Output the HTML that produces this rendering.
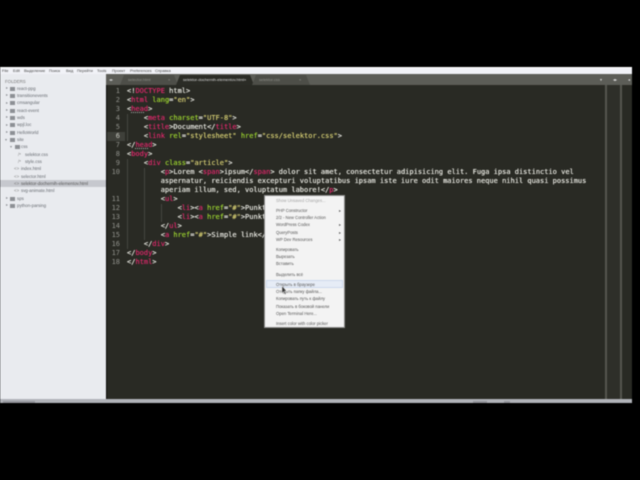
<!DOCTYPE html>
<html><head><meta charset="utf-8"><style>
html,body{margin:0;padding:0;width:640px;height:480px;overflow:hidden;background:#000}
*{box-sizing:border-box}
#f{position:absolute;left:0;top:0;width:640px;height:480px;filter:blur(.45px);overflow:hidden}
#code{position:absolute;left:0;top:1.5px;width:640px;height:320px}
.a{position:absolute;white-space:pre}
.m{font:4px/7px "Liberation Sans","Noto Sans CJK SC",sans-serif;color:#444;top:67px}
.s{font:4.4px/7px "Liberation Sans",sans-serif;color:#666a70}
.c{font:7px/9px "DejaVu Sans Mono",monospace;color:#f5f5ee;left:127px;-webkit-text-stroke:.12px currentColor}
.n{font:7px/9px "DejaVu Sans Mono",monospace;color:#8f908a;left:107px;width:13px;text-align:right}
i{font-style:normal;color:#e8286f}b{font-weight:normal;color:#a2dc30}u{text-decoration:none;color:#e0d878}
.k{font:4.2px/7px "Liberation Sans","Noto Sans CJK SC",sans-serif;color:#555;left:276px}
.ar{font:4px/7px "DejaVu Sans",sans-serif;color:#555;left:339px}
.t{font:4px/11px "Liberation Sans",sans-serif;top:74px;color:#8f908a}
.ico{position:absolute;width:5px;height:4px;background:#8d9095}
.tri{position:absolute;width:0;height:0;border-left:2px solid #8a8d92;border-top:1.5px solid transparent;border-bottom:1.5px solid transparent}
.tro{position:absolute;width:0;height:0;border-top:2px solid #8a8d92;border-left:1.5px solid transparent;border-right:1.5px solid transparent}
.g{position:absolute;width:1px;background:#45463f}
.tab{position:absolute;top:75px;height:10px;clip-path:polygon(0 100%,4px 0,calc(100% - 4px) 0,100% 100%)}
</style></head><body><div id="f">
<div class="a" style="left:0;top:67px;width:632px;height:7px;background:#f1f2f7"></div>
<div class="a" style="left:0;top:67px;width:632px;height:1px;background:#fff"></div>
<div class="a m" style="left:2px">File</div><div class="a m" style="left:13px">Edit</div><div class="a m" style="left:24px">Выделение</div><div class="a m" style="left:49px">Поиск</div><div class="a m" style="left:66px">Вид</div><div class="a m" style="left:77px">Перейти</div><div class="a m" style="left:97px">Tools</div><div class="a m" style="left:112px">Проект</div><div class="a m" style="left:130px">Preferences</div><div class="a m" style="left:155px">Справка</div>

<div class="a" style="left:0;top:74px;width:107px;height:325px;background:#e9ebef"></div>
<div class="a" style="left:5px;top:78px;font:4.4px/7px 'Liberation Sans',sans-serif;color:#777">FOLDERS</div>
<div class="a" style="left:0;top:180px;width:106px;height:7px;background:#c6c8ce"></div>

<div class="tri" style="left:6px;top:87px"></div><div class="ico" style="left:10px;top:87px"></div><div class="a s" style="left:17px;top:85px">react-ppg</div>
<div class="tri" style="left:6px;top:94px"></div><div class="ico" style="left:10px;top:94px"></div><div class="a s" style="left:17px;top:92px">transitionevents</div>
<div class="tri" style="left:6px;top:102px"></div><div class="ico" style="left:10px;top:101px"></div><div class="a s" style="left:17px;top:99px">cmsangular</div>
<div class="tri" style="left:6px;top:109px"></div><div class="ico" style="left:10px;top:109px"></div><div class="a s" style="left:17px;top:107px">react-event</div>
<div class="tri" style="left:6px;top:116px"></div><div class="ico" style="left:10px;top:116px"></div><div class="a s" style="left:17px;top:114px">wds</div>
<div class="tri" style="left:6px;top:124px"></div><div class="ico" style="left:10px;top:123px"></div><div class="a s" style="left:17px;top:121px">wpjl.loc</div>
<div class="tri" style="left:6px;top:131px"></div><div class="ico" style="left:10px;top:131px"></div><div class="a s" style="left:17px;top:129px">HelloWorld</div>
<div class="tro" style="left:5px;top:139px"></div><div class="ico" style="left:10px;top:138px"></div><div class="a s" style="left:17px;top:136px">site</div>
<div class="tro" style="left:10px;top:146px"></div><div class="ico" style="left:15px;top:145px"></div><div class="a s" style="left:21px;top:143px">css</div>
<div class="a s" style="left:18px;top:151px;color:#888">/*</div><div class="a s" style="left:25px;top:151px">selektor.css</div>
<div class="a s" style="left:18px;top:158px;color:#888">/*</div><div class="a s" style="left:25px;top:158px">style.css</div>
<div class="a s" style="left:14px;top:165px;color:#888">&lt;&gt;</div><div class="a s" style="left:21px;top:165px">index.html</div>
<div class="a s" style="left:14px;top:173px;color:#888">&lt;&gt;</div><div class="a s" style="left:21px;top:173px">selector.html</div>
<div class="a s" style="left:14px;top:180px;color:#777">&lt;&gt;</div><div class="a s" style="left:21px;top:180px;color:#555">selektor-dochernih-elementov.html</div>
<div class="a s" style="left:14px;top:187px;color:#888">&lt;&gt;</div><div class="a s" style="left:21px;top:187px">svg-animate.html</div>
<div class="tri" style="left:6px;top:197px"></div><div class="ico" style="left:10px;top:197px"></div><div class="a s" style="left:17px;top:195px">sps</div>
<div class="tri" style="left:6px;top:204px"></div><div class="ico" style="left:10px;top:204px"></div><div class="a s" style="left:17px;top:202px">python-parsing</div>

<div class="a" style="left:106px;top:74px;width:526px;height:11px;background:#5c5d57"></div>
<div class="tab" style="left:120px;width:58px;background:#4d4e48"></div>
<div class="tab" style="left:176px;width:78px;background:#2b2c26"></div>
<div class="tab" style="left:252px;width:58px;background:#4d4e48"></div>
<div class="a t" style="left:128px">selector.html</div><div class="a t" style="left:168px">×</div>
<div class="a t" style="left:183px;color:#ddd">selektor-dochernih-elementov.html</div><div class="a t" style="left:244px;color:#ddd">×</div>
<div class="a t" style="left:259px">selektor.css</div><div class="a t" style="left:299px">×</div>
<div class="a" style="left:109px;top:74px;font:4px/11px 'DejaVu Sans',sans-serif;color:#ccc">◂▸</div>
<div class="a" style="left:600px;top:74px;font:4px/11px 'DejaVu Sans',sans-serif;color:#ddd">▾</div>
<div class="a" style="left:613px;top:74px;font:4px/11px 'DejaVu Sans',sans-serif;color:#ddd">◂▸</div>
<div class="a" style="left:628px;top:74px;font:4px/11px 'DejaVu Sans',sans-serif;color:#ddd">◂</div>

<div class="a" style="left:106px;top:85px;width:526px;height:314px;background:#292a24"></div>
<div class="a" style="left:106px;top:85px;width:1px;height:314px;background:#0c0c0a"></div>
<div class="a" style="left:605px;top:85px;width:2px;height:314px;background:#55564f"></div>
<div class="a" style="left:620px;top:85px;width:2px;height:314px;background:#55564f"></div>
<div class="a" style="left:607px;top:85px;width:13px;height:314px;background:#2e2f29"></div>

<div id="code">
<div class="a" style="left:107px;top:130px;width:18px;height:9px;background:#3f403a"></div>
<div class="g" style="left:127px;top:112px;height:27px"></div>
<div class="g" style="left:127px;top:157px;height:90px"></div>
<div class="g" style="left:144px;top:166px;height:72px"></div>
<div class="g" style="left:161px;top:202px;height:18px"></div>

<div class="a n" style="top:85px">1</div><div class="a n" style="top:94px">2</div><div class="a n" style="top:103px">3</div><div class="a n" style="top:112px">4</div><div class="a n" style="top:121px">5</div><div class="a n" style="top:130px;color:#c8c8c0">6</div><div class="a n" style="top:139px">7</div><div class="a n" style="top:148px">8</div><div class="a n" style="top:157px">9</div><div class="a n" style="top:166px">10</div><div class="a n" style="top:193px">11</div><div class="a n" style="top:202px">12</div><div class="a n" style="top:211px">13</div><div class="a n" style="top:220px">14</div><div class="a n" style="top:229px">15</div><div class="a n" style="top:238px">16</div><div class="a n" style="top:247px">17</div><div class="a n" style="top:256px">18</div>

<div class="a c" style="top:85px">&lt;!<i>DOCTYPE</i> html&gt;</div>
<div class="a c" style="top:94px">&lt;<i>html</i> <b>lang</b>=<u>"en"</u>&gt;</div>
<div class="a c" style="top:103px">&lt;<i>head</i>&gt;</div>
<div class="a c" style="top:112px">    &lt;<i>meta</i> <b>charset</b>=<u>"UTF-8"</u>&gt;</div>
<div class="a c" style="top:121px">    &lt;<i>title</i>&gt;Document&lt;/<i>title</i>&gt;</div>
<div class="a c" style="top:130px">    &lt;<i>link</i> <b>rel</b>=<u>"stylesheet"</u> <b>href</b>=<u>"css/selektor.css"</u>&gt;</div>
<div class="a c" style="top:139px">&lt;/<i>head</i>&gt;</div>
<div class="a c" style="top:148px">&lt;<i>body</i>&gt;</div>
<div class="a c" style="top:157px">    &lt;<i>div</i> <b>class</b>=<u>"article"</u>&gt;</div>
<div class="a c" style="top:166px">        &lt;<i>p</i>&gt;Lorem &lt;<i>span</i>&gt;ipsum&lt;/<i>span</i>&gt; dolor sit amet, consectetur adipisicing elit. Fuga ipsa distinctio vel</div>
<div class="a c" style="top:175px">        aspernatur, reiciendis excepturi voluptatibus ipsam iste iure odit maiores neque nihil quasi possimus</div>
<div class="a c" style="top:184px">        aperiam illum, sed, voluptatum labore!&lt;/<i>p</i>&gt;</div>
<div class="a c" style="top:193px">        &lt;<i>ul</i>&gt;</div>
<div class="a c" style="top:202px">            &lt;<i>li</i>&gt;&lt;<i>a</i> <b>href</b>=<u>"#"</u>&gt;Punkt 1&lt;/<i>a</i>&gt;&lt;/<i>li</i>&gt;</div>
<div class="a c" style="top:211px">            &lt;<i>li</i>&gt;&lt;<i>a</i> <b>href</b>=<u>"#"</u>&gt;Punkt 2&lt;/<i>a</i>&gt;&lt;/<i>li</i>&gt;</div>
<div class="a c" style="top:220px">        &lt;/<i>ul</i>&gt;</div>
<div class="a c" style="top:229px">        &lt;<i>a</i> <b>href</b>=<u>"#"</u>&gt;Simple link&lt;/<i>a</i>&gt;</div>
<div class="a c" style="top:238px">    &lt;/<i>div</i>&gt;</div>
<div class="a c" style="top:247px">&lt;/<i>body</i>&gt;</div>
<div class="a c" style="top:256px">&lt;/<i>html</i>&gt;</div>
<div class="a" style="left:131px;top:110.5px;width:13px;height:0;border-top:1px dotted #aaa"></div>
<div class="a" style="left:135px;top:146.5px;width:13px;height:0;border-top:1px dotted #aaa"></div>
</div>

<div class="a" style="left:264px;top:195px;width:81px;height:133px;background:#f3f3f3;border:1px solid #8a8a8a"></div>
<div class="a" style="left:266px;top:280px;width:77px;height:8px;background:#e6ecf6;border:1px solid #cdd9ec"></div>
<div class="a k" style="top:197px;color:#a5a5a5">Show Unsaved Changes...</div>
<div class="a k" style="top:207px">PHP Constructor</div><div class="a ar" style="top:207px">▸</div>
<div class="a k" style="top:214px">2/2 - New Controller Action</div>
<div class="a k" style="top:221px">WordPress Codex</div><div class="a ar" style="top:221px">▸</div>
<div class="a k" style="top:229px">QueryPosts</div><div class="a ar" style="top:229px">▸</div>
<div class="a k" style="top:236px">WP Dev Resources</div><div class="a ar" style="top:236px">▸</div>
<div class="a k" style="top:246px">Копировать</div>
<div class="a k" style="top:253px">Вырезать</div>
<div class="a k" style="top:260px">Вставить</div>
<div class="a k" style="top:271px">Выделить всё</div>
<div class="a k" style="top:281px">Открыть в браузере</div>
<div class="a k" style="top:288px">Открыть папку файла...</div>
<div class="a k" style="top:295px">Копировать путь к файлу</div>
<div class="a k" style="top:303px">Показать в боковой панели</div>
<div class="a k" style="top:310px">Open Terminal Here...</div>
<div class="a k" style="top:320px">Insert color with color picker</div>
<svg class="a" style="left:281px;top:286px" width="6" height="9" viewBox="0 0 6 9"><path d="M1 0v7l1.5-1.5L4 8.5l1-.5L3.5 5H5.5z" fill="#333" stroke="#eee" stroke-width=".4"/></svg>

<div class="a" style="left:0;top:399px;width:632px;height:4px;background:#b0b2b8"></div>
<div class="a" style="left:3px;top:401px;width:32px;height:2px;background:#94969c"></div>
<div class="a" style="left:473px;top:401px;width:14px;height:2px;background:#94969c"></div>
<div class="a" style="left:504px;top:401px;width:6px;height:2px;background:#94969c"></div>
</div></body></html>
